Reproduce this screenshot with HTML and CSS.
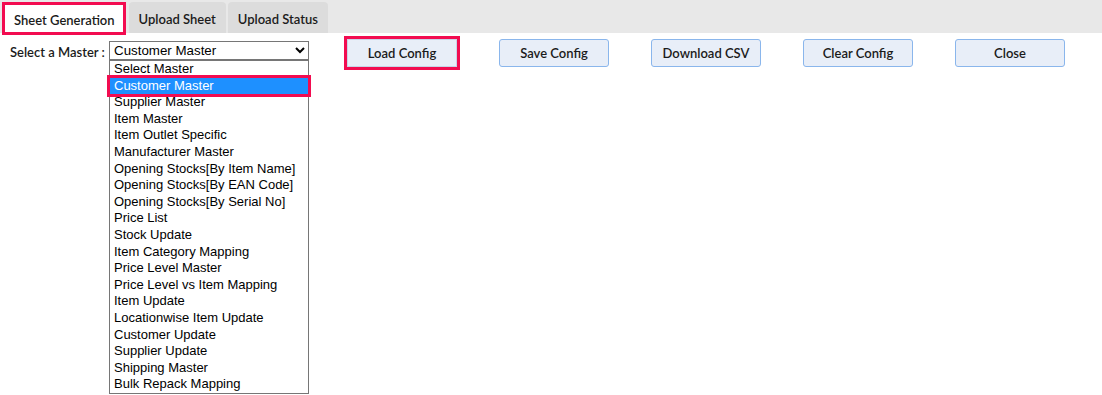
FILE: index.html
```html
<!DOCTYPE html>
<html lang="en">

<head>
    <meta charset="UTF-8">
    <title>Sheet Generation</title>
    <link rel="stylesheet" href="styles.css">
</head>

<body>
    <div class="tabbar">
        <div class="tab active">Sheet Generation</div>
        <div class="tab">Upload Sheet</div>
        <div class="tab">Upload Status</div>
    </div>

    <div class="toolbar">
        <label class="master-label" for="master">Select a Master :</label>
        <div class="select-wrap">
            <select id="master" class="master-select">
                <option>Select Master</option>
                <option selected>Customer Master</option>
            </select>
            <ul class="dropdown">
                <li>Select Master</li>
                <li class="hover">Customer Master</li>
                <li>Supplier Master</li>
                <li>Item Master</li>
                <li>Item Outlet Specific</li>
                <li>Manufacturer Master</li>
                <li>Opening Stocks[By Item Name]</li>
                <li>Opening Stocks[By EAN Code]</li>
                <li>Opening Stocks[By Serial No]</li>
                <li>Price List</li>
                <li>Stock Update</li>
                <li>Item Category Mapping</li>
                <li>Price Level Master</li>
                <li>Price Level vs Item Mapping</li>
                <li>Item Update</li>
                <li>Locationwise Item Update</li>
                <li>Customer Update</li>
                <li>Supplier Update</li>
                <li>Shipping Master</li>
                <li>Bulk Repack Mapping</li>
            </ul>
        </div>
        <div class="buttons">
            <button class="btn marked">Load Config</button>
            <button class="btn">Save Config</button>
            <button class="btn">Download CSV</button>
            <button class="btn">Clear Config</button>
            <button class="btn">Close</button>
        </div>
    </div>
</body>

</html>
```

FILE: styles.css
```css
* {
    padding: 0;
    margin: 0;
    box-sizing: border-box;
}

body {
    background-color: #fff;
    font-family: Lato, "Liberation Sans", sans-serif;
    color: #222;
}

.tabbar {
    display: flex;
    gap: 2px;
    height: 33px;
    padding: 2px 0 0 2px;
    background-color: #e8e8e8;
}

.tab {
    height: 31px;
    padding: 0 10px;
    line-height: 34px;
    font-size: 13px;
    font-weight: 600;
    color: #1b1b1b;
    background-color: #dcdcdc;
    border-radius: 4px 4px 0 0;
}

.tab.active {
    height: 33px;
    padding: 0 8px 0 9px;
    line-height: 30px;
    background-color: #fff;
    border: 3px solid #f20c50;
    border-radius: 0;
    margin-right: 1px;
}

.toolbar {
    display: flex;
    align-items: flex-start;
    padding: 6px 0 0 10px;
}

.master-label {
    width: 99px;
    margin-top: 5px;
    font-size: 13px;
    font-weight: 600;
    color: #1b1b1b;
}

.select-wrap {
    display: flex;
    flex-direction: column;
    width: 200px;
    margin-top: 2px;
}

.master-select {
    display: block;
    width: 200px;
    height: 19px;
    font-family: "Liberation Sans", Arial, sans-serif;
    font-size: 13.33px;
    color: #000;
    border: 1px solid #767676;
    background-color: #fff;
}

.dropdown {
    width: 200px;
    list-style: none;
    border: 1px solid #767676;
    background-color: #fff;
    font-family: "Liberation Sans", Arial, sans-serif;
    font-size: 13px;
    color: #000;
}

.dropdown li {
    height: 16.6px;
    line-height: 16.6px;
    padding-left: 4px;
    white-space: nowrap;
}

.dropdown li.hover {
    position: relative;
    background-color: #1e90ff;
    color: #fff;
    outline: 3px solid #f20c50;
}

.buttons {
    display: flex;
    gap: 42px;
    margin-left: 38px;
}

.btn {
    width: 110px;
    height: 28px;
    font-family: Lato, "Liberation Sans", sans-serif;
    font-size: 13px;
    font-weight: 600;
    color: #1b1b1b;
    background-color: #e8eef8;
    border: 1px solid #8ab6ec;
    border-radius: 3px;
}

.btn.marked {
    border-radius: 0;
    outline: 3px solid #f20c50;
    border-color: #c7d4e8;
}
```
